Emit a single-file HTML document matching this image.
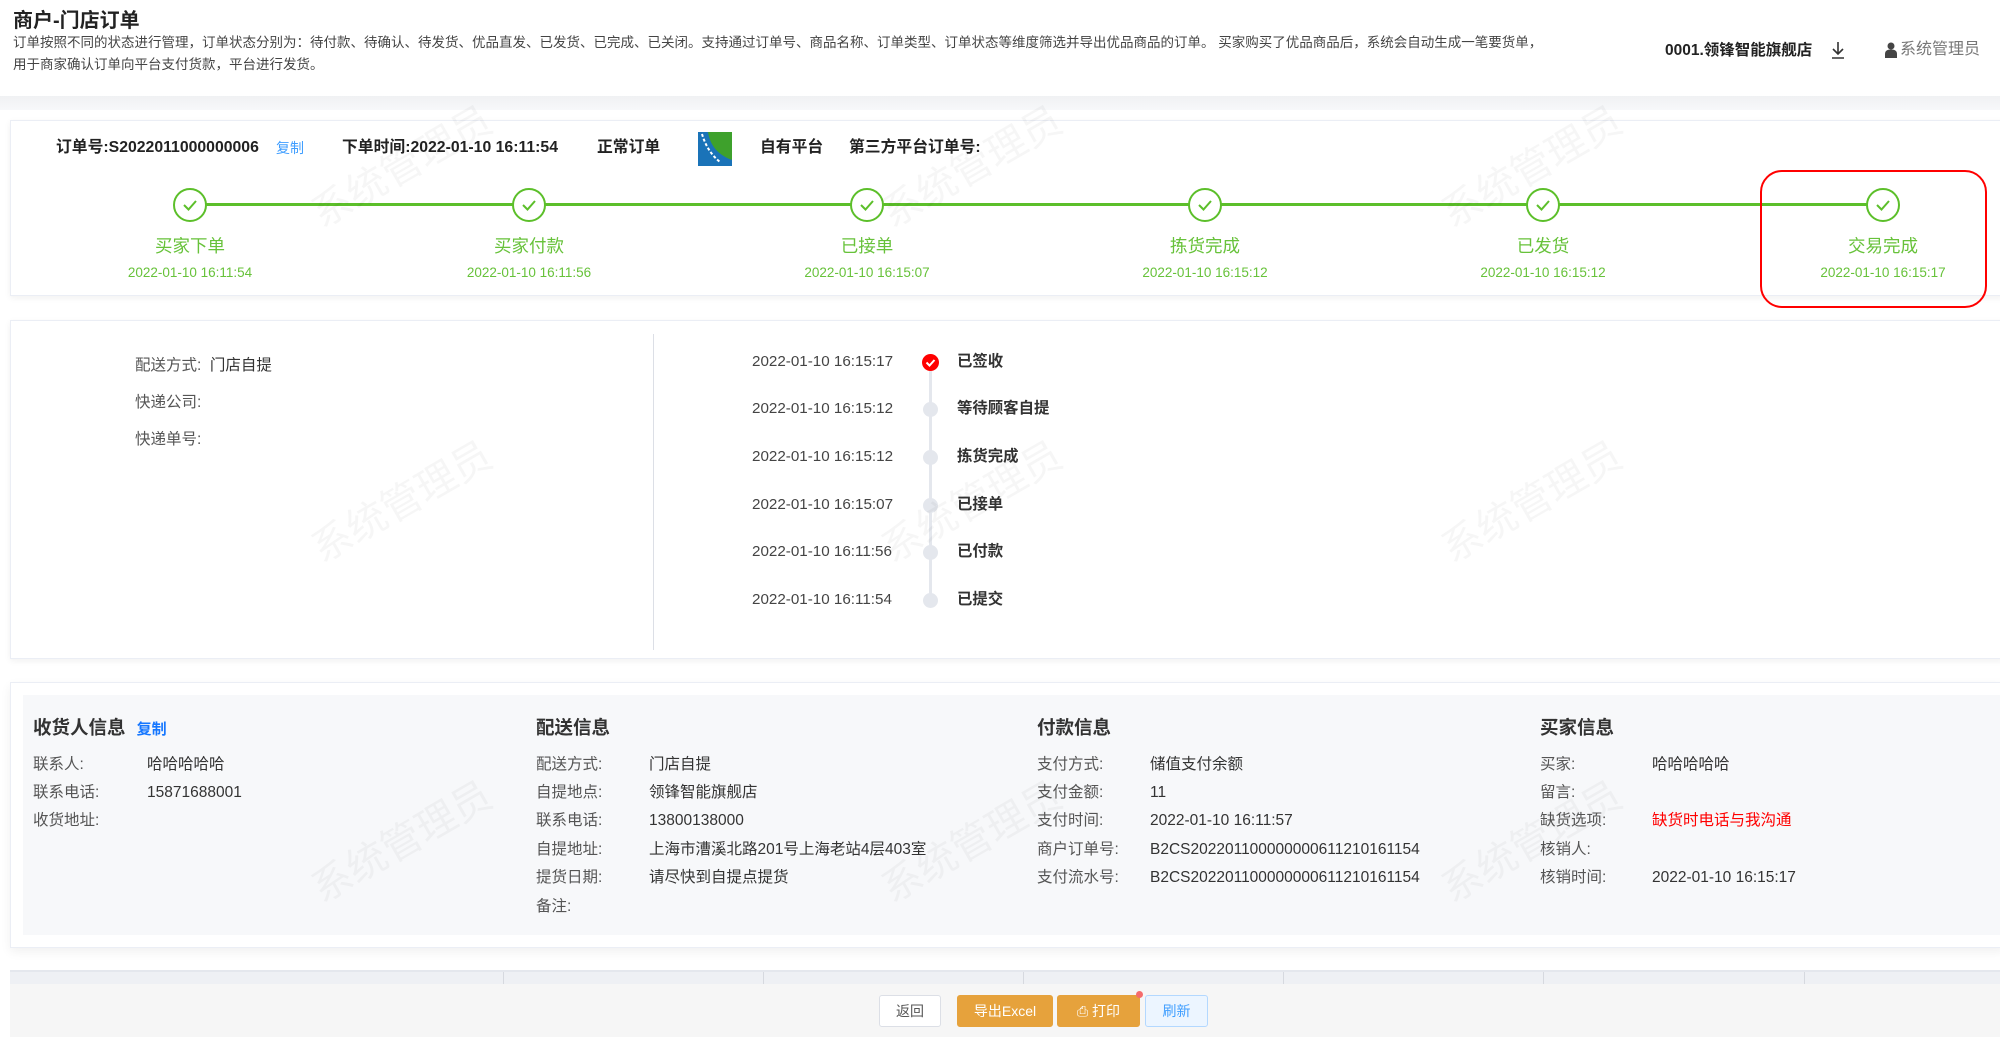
<!DOCTYPE html>
<html><head><meta charset="utf-8"><style>
*{margin:0;padding:0;box-sizing:border-box}
body{width:2000px;height:1037px;position:relative;overflow:hidden;background:#fff;font-family:"Liberation Sans","Noto Sans CJK SC",sans-serif;color:#333}
.a{position:absolute;white-space:nowrap}
.wm{position:absolute;color:rgba(0,0,0,0.035);font-size:40px;transform:rotate(-30deg);white-space:nowrap}
.lab{font-size:15.5px;color:#555;line-height:20px}
.val{font-size:15.5px;color:#333;line-height:20px}
.h{font-size:18.5px;font-weight:bold;color:#333;line-height:24px}
.ob{font-size:15.8px;font-weight:bold;color:#222;line-height:20px}
.step{position:absolute;width:34px;height:34px;border:2px solid #5cbf2a;border-radius:50%;background:#fff;top:188px}
.sl{position:absolute;font-size:17.5px;color:#67c23a;line-height:24px;transform:translateX(-50%);white-space:nowrap}
.sd{position:absolute;font-size:13.5px;color:#67c23a;line-height:18px;transform:translateX(-50%);white-space:nowrap}
.td{position:absolute;font-size:15.2px;color:#444;line-height:20px;left:752px}
.tt{position:absolute;font-size:15.4px;font-weight:bold;color:#333;line-height:20px;left:957px}
.dot{position:absolute;left:923px;width:15px;height:15px;border-radius:50%;background:#e4e7ed}
.btn{position:absolute;top:995px;height:32px;border-radius:3px;font-size:14px;line-height:30px;text-align:center}
</style></head><body>
<div class="a" style="left:13px;top:8px;font-size:20px;font-weight:bold;color:#222;line-height:26px">商户-门店订单</div>
<div class="a" style="left:13px;top:34px;font-size:13.5px;color:#444;line-height:18px">订单按照不同的状态进行管理，订单状态分别为：待付款、待确认、待发货、优品直发、已发货、已完成、已关闭。支持通过订单号、商品名称、订单类型、订单状态等维度筛选并导出优品商品的订单。 买家购买了优品商品后，系统会自动生成一笔要货单，</div>
<div class="a" style="left:13px;top:56px;font-size:13.5px;color:#444;line-height:18px">用于商家确认订单向平台支付货款，平台进行发货。</div>
<div class="a" style="left:1665px;top:41px;font-size:15.5px;font-weight:bold;color:#222;line-height:20px">0001.领锋智能旗舰店</div>
<svg class="a" style="left:1829px;top:40px" width="18" height="20" viewBox="0 0 18 20"><path d="M9 2v12M4 9l5 5 5-5M3 18h12" stroke="#333" stroke-width="1.6" fill="none"/></svg>
<svg class="a" style="left:1885px;top:42px" width="12" height="16" viewBox="0 0 12 16"><circle cx="6" cy="4" r="3.5" fill="#444"/><path d="M0 16v-4c0-3 2-4.5 6-4.5s6 1.5 6 4.5v4z" fill="#444"/></svg>
<div class="a" style="left:1900px;top:40px;font-size:16px;color:#777;line-height:20px">系统管理员</div>
<div class="a" style="left:0;top:96px;width:2000px;height:14px;background:linear-gradient(#f0f1f3,#f7f8fa)"></div>

<div class="a" style="left:10px;top:120px;width:1995px;height:176px;border:1px solid #ebeef5;box-shadow:0 2px 6px rgba(0,0,0,0.06);background:#fff"></div>
<div class="a ob" style="left:56px;top:138px">订单号:S2022011000000006</div>
<div class="a" style="left:276px;top:138px;font-size:14px;color:#409eff;line-height:20px">复制</div>
<div class="a ob" style="left:342px;top:138px">下单时间:2022-01-10 16:11:54</div>
<div class="a ob" style="left:597px;top:138px">正常订单</div>
<svg class="a" style="left:698px;top:132px" width="34" height="34" viewBox="0 0 34 34"><rect width="34" height="34" fill="#3ea12c"/><path d="M0 0h10c2 12 8 22 24 28v6H0z" fill="#1a73b8"/><path d="M4 2c3 10 8 20 18 28" stroke="#fff" stroke-width="2" fill="none" stroke-dasharray="3 2"/></svg>
<div class="a ob" style="left:760px;top:138px">自有平台</div>
<div class="a ob" style="left:849px;top:138px">第三方平台订单号:</div>
<div class="a" style="left:190px;top:203px;width:1693px;height:3px;background:#5cbf2a"></div>
<div class="step" style="left:173px"><svg width="30" height="30" viewBox="0 0 30 30"><path d="M9 15l4.5 4.5L21 11" stroke="#5cbf2a" stroke-width="2" fill="none"/></svg></div>
<div class="step" style="left:512px"><svg width="30" height="30" viewBox="0 0 30 30"><path d="M9 15l4.5 4.5L21 11" stroke="#5cbf2a" stroke-width="2" fill="none"/></svg></div>
<div class="step" style="left:850px"><svg width="30" height="30" viewBox="0 0 30 30"><path d="M9 15l4.5 4.5L21 11" stroke="#5cbf2a" stroke-width="2" fill="none"/></svg></div>
<div class="step" style="left:1188px"><svg width="30" height="30" viewBox="0 0 30 30"><path d="M9 15l4.5 4.5L21 11" stroke="#5cbf2a" stroke-width="2" fill="none"/></svg></div>
<div class="step" style="left:1526px"><svg width="30" height="30" viewBox="0 0 30 30"><path d="M9 15l4.5 4.5L21 11" stroke="#5cbf2a" stroke-width="2" fill="none"/></svg></div>
<div class="step" style="left:1866px"><svg width="30" height="30" viewBox="0 0 30 30"><path d="M9 15l4.5 4.5L21 11" stroke="#5cbf2a" stroke-width="2" fill="none"/></svg></div>
<div class="sl" style="left:190px;top:234px">买家下单</div><div class="sd" style="left:190px;top:264px">2022-01-10 16:11:54</div>
<div class="sl" style="left:529px;top:234px">买家付款</div><div class="sd" style="left:529px;top:264px">2022-01-10 16:11:56</div>
<div class="sl" style="left:867px;top:234px">已接单</div><div class="sd" style="left:867px;top:264px">2022-01-10 16:15:07</div>
<div class="sl" style="left:1205px;top:234px">拣货完成</div><div class="sd" style="left:1205px;top:264px">2022-01-10 16:15:12</div>
<div class="sl" style="left:1543px;top:234px">已发货</div><div class="sd" style="left:1543px;top:264px">2022-01-10 16:15:12</div>
<div class="sl" style="left:1883px;top:234px">交易完成</div><div class="sd" style="left:1883px;top:264px">2022-01-10 16:15:17</div>
<div class="a" style="left:1760px;top:170px;width:227px;height:138px;border:2px solid #ff0000;border-radius:22px"></div>

<div class="a" style="left:10px;top:320px;width:1995px;height:339px;border:1px solid #ebeef5;box-shadow:0 2px 6px rgba(0,0,0,0.06);background:#fff"></div>
<div class="a lab" style="left:135px;top:356px">配送方式:&nbsp;&nbsp;<span style="color:#333">门店自提</span></div>
<div class="a lab" style="left:135px;top:393px">快递公司:</div>
<div class="a lab" style="left:135px;top:430px">快递单号:</div>
<div class="a" style="left:653px;top:334px;width:1px;height:316px;background:#dcdfe6"></div>
<div class="a" style="left:929px;top:362px;width:3px;height:238px;background:#e4e7ed"></div>
<div class="a" style="left:922px;top:354px;width:17px;height:17px;border-radius:50%;background:#f00"><svg width="17" height="17" viewBox="0 0 17 17"><path d="M4.5 8.5l3 3 5-5.5" stroke="#fff" stroke-width="2" fill="none"/></svg></div>
<div class="dot" style="top:402px"></div><div class="dot" style="top:450px"></div><div class="dot" style="top:498px"></div><div class="dot" style="top:545px"></div><div class="dot" style="top:593px"></div>
<div class="td" style="top:352px">2022-01-10 16:15:17</div><div class="tt" style="top:352px">已签收</div>
<div class="td" style="top:399px">2022-01-10 16:15:12</div><div class="tt" style="top:399px">等待顾客自提</div>
<div class="td" style="top:447px">2022-01-10 16:15:12</div><div class="tt" style="top:447px">拣货完成</div>
<div class="td" style="top:495px">2022-01-10 16:15:07</div><div class="tt" style="top:495px">已接单</div>
<div class="td" style="top:542px">2022-01-10 16:11:56</div><div class="tt" style="top:542px">已付款</div>
<div class="td" style="top:590px">2022-01-10 16:11:54</div><div class="tt" style="top:590px">已提交</div>

<div class="a" style="left:10px;top:682px;width:1995px;height:266px;border:1px solid #ebeef5;box-shadow:0 4px 10px rgba(0,0,0,0.06);background:#fff"></div>
<div class="a" style="left:23px;top:695px;width:1980px;height:240px;background:#f7f8fa"></div>
<div class="a h" style="left:33px;top:716px">收货人信息 <span style="color:#1677ff;font-size:15px;margin-left:6px">复制</span></div>
<div class="a h" style="left:536px;top:716px">配送信息</div>
<div class="a h" style="left:1037px;top:716px">付款信息</div>
<div class="a h" style="left:1540px;top:716px">买家信息</div>

<div class="a lab" style="left:33px;top:755px">联系人:</div><div class="a val" style="left:147px;top:755px">哈哈哈哈哈</div>
<div class="a lab" style="left:33px;top:783px">联系电话:</div><div class="a val" style="left:147px;top:783px">15871688001</div>
<div class="a lab" style="left:33px;top:811px">收货地址:</div>

<div class="a lab" style="left:536px;top:755px">配送方式:</div><div class="a val" style="left:649px;top:755px">门店自提</div>
<div class="a lab" style="left:536px;top:783px">自提地点:</div><div class="a val" style="left:649px;top:783px">领锋智能旗舰店</div>
<div class="a lab" style="left:536px;top:811px">联系电话:</div><div class="a val" style="left:649px;top:811px">13800138000</div>
<div class="a lab" style="left:536px;top:840px">自提地址:</div><div class="a val" style="left:649px;top:840px">上海市漕溪北路201号上海老站4层403室</div>
<div class="a lab" style="left:536px;top:868px">提货日期:</div><div class="a val" style="left:649px;top:868px">请尽快到自提点提货</div>
<div class="a lab" style="left:536px;top:897px">备注:</div>

<div class="a lab" style="left:1037px;top:755px">支付方式:</div><div class="a val" style="left:1150px;top:755px">储值支付余额</div>
<div class="a lab" style="left:1037px;top:783px">支付金额:</div><div class="a val" style="left:1150px;top:783px">11</div>
<div class="a lab" style="left:1037px;top:811px">支付时间:</div><div class="a val" style="left:1150px;top:811px">2022-01-10 16:11:57</div>
<div class="a lab" style="left:1037px;top:840px">商户订单号:</div><div class="a val" style="left:1150px;top:840px">B2CS202201100000000611210161154</div>
<div class="a lab" style="left:1037px;top:868px">支付流水号:</div><div class="a val" style="left:1150px;top:868px">B2CS202201100000000611210161154</div>

<div class="a lab" style="left:1540px;top:755px">买家:</div><div class="a val" style="left:1652px;top:755px">哈哈哈哈哈</div>
<div class="a lab" style="left:1540px;top:783px">留言:</div>
<div class="a lab" style="left:1540px;top:811px">缺货选项:</div><div class="a val" style="left:1652px;top:811px;color:#f00">缺货时电话与我沟通</div>
<div class="a lab" style="left:1540px;top:840px">核销人:</div>
<div class="a lab" style="left:1540px;top:868px">核销时间:</div><div class="a val" style="left:1652px;top:868px">2022-01-10 16:15:17</div>

<div class="a" style="left:10px;top:970px;width:1995px;height:14px;background:#eef0f4;border-top:2px solid #e4e7ed"></div>
<div class="a" style="left:503px;top:972px;width:1px;height:12px;background:#d6d9df"></div>
<div class="a" style="left:763px;top:972px;width:1px;height:12px;background:#d6d9df"></div>
<div class="a" style="left:1023px;top:972px;width:1px;height:12px;background:#d6d9df"></div>
<div class="a" style="left:1283px;top:972px;width:1px;height:12px;background:#d6d9df"></div>
<div class="a" style="left:1543px;top:972px;width:1px;height:12px;background:#d6d9df"></div>
<div class="a" style="left:1804px;top:972px;width:1px;height:12px;background:#d6d9df"></div>
<div class="a" style="left:10px;top:984px;width:1995px;height:53px;background:#f6f6f6"></div>
<div class="btn" style="left:879px;width:62px;background:#fff;border:1px solid #dcdfe6;color:#555">返回</div>
<div class="btn" style="left:957px;width:96px;background:#e6a23c;border:1px solid #e6a23c;color:#fff">导出Excel</div>
<div class="btn" style="left:1057px;width:83px;background:#e6a23c;border:1px solid #e6a23c;color:#fff">⎙ 打印</div>
<div class="a" style="left:1136px;top:991px;width:7px;height:7px;border-radius:50%;background:#f56c6c"></div>
<div class="btn" style="left:1145px;width:63px;background:#ecf5ff;border:1px solid #b3d8ff;color:#409eff">刷新</div>

<div class="wm" style="left:300px;top:135px">系统管理员</div>
<div class="wm" style="left:870px;top:135px">系统管理员</div>
<div class="wm" style="left:1430px;top:135px">系统管理员</div>
<div class="wm" style="left:300px;top:470px">系统管理员</div>
<div class="wm" style="left:870px;top:470px">系统管理员</div>
<div class="wm" style="left:1430px;top:470px">系统管理员</div>
<div class="wm" style="left:300px;top:810px">系统管理员</div>
<div class="wm" style="left:870px;top:810px">系统管理员</div>
<div class="wm" style="left:1430px;top:810px">系统管理员</div>
</body></html>
